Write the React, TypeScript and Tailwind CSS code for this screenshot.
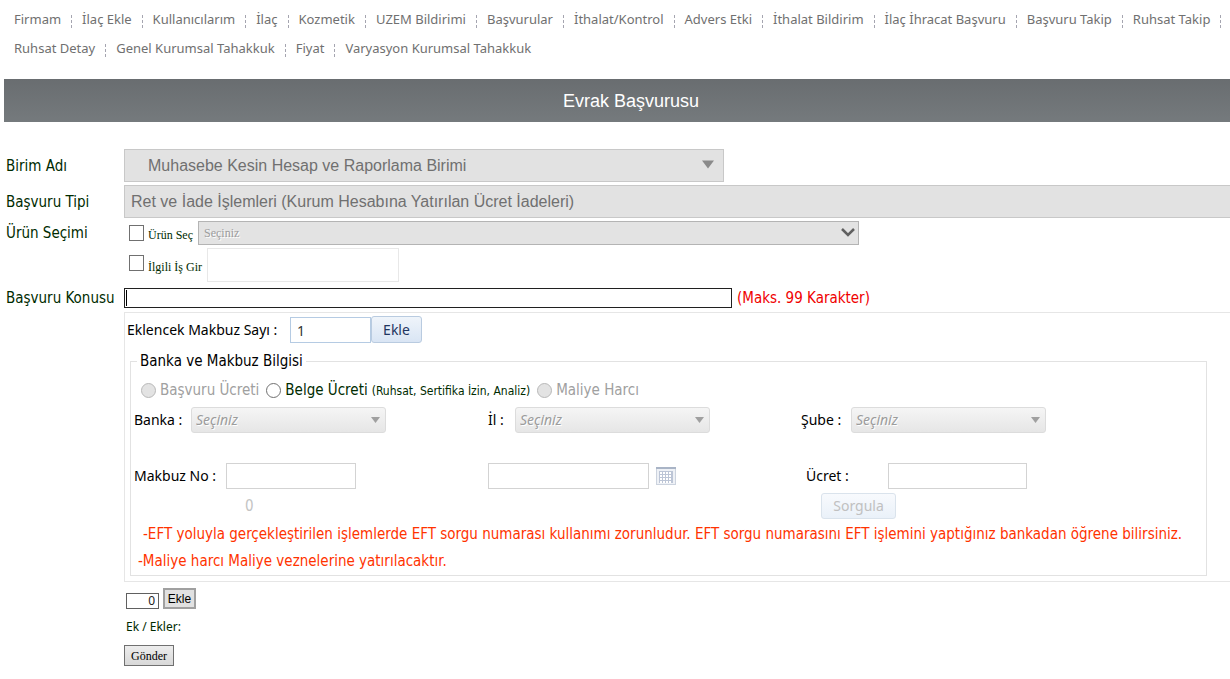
import { useState } from "react";
import type { ReactNode } from "react";

const MENU = [
  [
    "Firmam", "İlaç Ekle", "Kullanıcılarım", "İlaç", "Kozmetik", "UZEM Bildirimi", "Başvurular",
    "İthalat/Kontrol", "Advers Etki", "İthalat Bildirim", "İlaç İhracat Başvuru", "Başvuru Takip", "Ruhsat Takip",
  ],
  ["Ruhsat Detay", "Genel Kurumsal Tahakkuk", "Fiyat", "Varyasyon Kurumsal Tahakkuk"],
];

const UCRET_TIPLERI = [
  { id: "basvuru", label: "Başvuru Ücreti", disabled: true },
  { id: "belge", label: "Belge Ücreti", note: "(Ruhsat, Sertifika İzin, Analiz)" },
  { id: "maliye", label: "Maliye Harcı", disabled: true },
];

const BOX = "border border-[#d3d3d3] bg-white h-[26px] px-1 text-sm outline-none";
const TAHOMA = "font-['Tahoma','DejaVu_Sans_Condensed',sans-serif] text-[15px]";

function Row({ label, htmlFor, children }: { label: string; htmlFor?: string; children: ReactNode }) {
  return (
    <div className="flex items-center">
      <label htmlFor={htmlFor} className={`w-[124px] shrink-0 whitespace-nowrap pl-[6px] leading-5 text-[#002b00] ${TAHOMA}`}>
        {label}
      </label>
      {children}
    </div>
  );
}

function Triangle({ className }: { className: string }) {
  return (
    <svg viewBox="0 0 12 8" className={`pointer-events-none absolute ${className}`} aria-hidden="true">
      <path d="M0 0h12L6 8z" fill="currentColor" />
    </svg>
  );
}

function SmallSelect({ id, label, labelWidth }: { id: string; label: string; labelWidth: string }) {
  return (
    <div className="flex items-center">
      <label htmlFor={id} className={`${labelWidth} shrink-0 whitespace-nowrap text-sm`}>{label}</label>
      <div className="relative w-[195px]">
        <select
          id={id}
          disabled
          className="block h-[26px] w-full appearance-none rounded-[3px] border border-[#dcdcdc] bg-linear-to-b from-[#f5f5f5] to-[#e6e6e6] px-1 text-sm italic text-[#9c9c9c] opacity-100 text-shadow-[1px_1px_0_#fff]"
        >
          <option>Seçiniz</option>
        </select>
        <Triangle className="right-[6px] top-[10px] h-[6px] w-[9px] text-[#a0a0a0]" />
      </div>
    </div>
  );
}

function CalendarIcon() {
  return (
    <svg width="20" height="18" viewBox="0 0 20 18" shapeRendering="crispEdges" aria-hidden="true">
      <rect x="0" y="0" width="20" height="18" fill="#ccd3de" />
      <rect x="1" y="2" width="18" height="15" fill="#eef1f6" />
      <rect x="0" y="0" width="20" height="2" fill="#a9b4c6" />
      <rect x="3" y="4" width="14" height="12" fill="#bcc5d6" />
      {[4, 7, 10, 13].map((y) =>
        [4, 7, 10, 13].map((x) => <rect key={`${x}-${y}`} x={x} y={y + 1} width="2" height="2" fill="#fff" />)
      )}
    </svg>
  );
}

export default function App() {
  const [konu, setKonu] = useState("");
  const [ucretTipi, setUcretTipi] = useState("");

  return (
    <div className="overflow-x-hidden bg-white pb-3 font-['Noto_Sans','Open_Sans',sans-serif] text-black">
      {/* Menu */}
      <nav className="flex flex-col gap-[5px] pl-[14px] pt-2">
        {MENU.map((items, row) => (
          <ul key={row} className="flex h-6 items-center whitespace-nowrap text-[13px] text-[#707070]">
            {items.map((item, i) => (
              <li key={item} className="flex items-center">
                <a href="#">{item}</a>
                {(row === 0 || i < items.length - 1) && (
                  <span className="mx-[10px] mt-[3px] h-[13px] border-l border-dashed border-[#a5a5b0]" />
                )}
              </li>
            ))}
          </ul>
        ))}
      </nav>

      <h1 className="ml-1 mt-[18px] flex h-[43px] items-center justify-center bg-linear-to-b from-[#696d70] to-[#757a7d] pl-7 font-['Liberation_Sans',Arial,sans-serif] text-lg text-white">
        Evrak Başvurusu
      </h1>

      <form className="mt-[27px] flex flex-col" onSubmit={(e) => e.preventDefault()}>
        <div className="flex flex-col gap-[3px]">
          <Row label="Birim Adı" htmlFor="birim">
            <div className="relative w-[600px]">
              <select
                id="birim"
                disabled
                className="block h-[33px] w-full appearance-none border border-[#c8c8c8] bg-[#e2e2e2] pl-[23px] font-['Liberation_Sans',Arial,sans-serif] text-base text-[#707070] opacity-100"
              >
                <option>Muhasebe Kesin Hesap ve Raporlama Birimi</option>
              </select>
              <Triangle className="right-[10px] top-[11px] h-[9px] w-3 text-[#8a8a8a]" />
            </div>
          </Row>
          <Row label="Başvuru Tipi" htmlFor="tip">
            <input
              id="tip"
              disabled
              value="Ret ve İade İşlemleri (Kurum Hesabına Yatırılan Ücret İadeleri)"
              className="h-[33px] flex-1 border border-r-0 border-[#c8c8c8] bg-[#e2e2e2] px-[6px] font-['Liberation_Sans',Arial,sans-serif] text-base text-[#707070]"
            />
          </Row>
          <Row label="Ürün Seçimi" htmlFor="urun">
            <div className="flex h-6 items-center pl-[5px] font-['Liberation_Serif','Times_New_Roman',serif] text-xs">
              <input id="urunSec" type="checkbox" className="h-4 w-[15px] appearance-none border border-[#707070] bg-white" />
              <label htmlFor="urunSec" className="w-[54px] whitespace-nowrap pl-1 pt-1 text-[#002b00]">Ürün Seç</label>
              <div className="relative w-[661px]">
                <select
                  id="urun"
                  disabled
                  className="block h-6 w-full appearance-none border border-[#b4b4b4] bg-[#e3e3e3] px-[5px] text-xs text-[#9c9c9c] opacity-100 text-shadow-[1px_1px_0_#fff]"
                >
                  <option>Seçiniz</option>
                </select>
                <svg viewBox="0 0 14 9" className="pointer-events-none absolute right-[4px] top-[7px] h-[9px] w-[14px]" aria-hidden="true">
                  <path d="M1 1l6 6 6-6" fill="none" stroke="#606060" strokeWidth="2.5" />
                </svg>
              </div>
            </div>
          </Row>
        </div>

        <div className="mt-[3px] flex items-center pl-[129px] font-['Liberation_Serif','Times_New_Roman',serif] text-xs">
          <input id="isGir" type="checkbox" className="mb-1 h-4 w-[15px] appearance-none border border-[#707070] bg-white" />
          <label htmlFor="isGir" className="w-[63px] whitespace-nowrap pl-1 pt-1 text-[#002b00]">İlgili İş Gir</label>
          <input aria-label="İlgili İş" className="h-[34px] w-48 border border-[#e8e8e8] bg-white px-1 outline-none" />
        </div>

        <div className="mt-[6px]">
          <Row label="Başvuru Konusu" htmlFor="konu">
            <div className="relative w-[608px]">
              <input
                id="konu"
                maxLength={99}
                value={konu}
                onChange={(e) => setKonu(e.target.value)}
                className="block h-5 w-full border border-[#202020] bg-white px-[3px] text-sm outline-none"
              />
              <span className="absolute left-[2px] top-[2px] h-4 w-px bg-black" />
            </div>
            <span className={`whitespace-nowrap pl-[5px] leading-5 text-[#f00000] ${TAHOMA}`}>(Maks. 99 Karakter)</span>
          </Row>
        </div>

        {/* Receipt panel */}
        <div className="ml-[124px] mt-[4px] border border-r-0 border-[#e6e6e6] pb-[5px] pl-[5px] pr-[23px]">
          <div className="-ml-[3px] flex items-center pt-[3px]">
            <label htmlFor="makbuzSayi" className="w-[163px] text-sm">Eklencek Makbuz Sayı :</label>
            <input id="makbuzSayi" defaultValue="1" className="mt-[1px] h-[26px] w-[81px] border border-[#b5cbe3] px-[6px] text-sm text-[#333] outline-none" />
            <button type="button" className="h-[27px] w-[51px] rounded-[3px] border border-[#b9cbe0] bg-linear-to-b from-[#eff4fa] to-[#d9e5f4] text-sm text-[#1f3560]">
              Ekle
            </button>
          </div>

          <fieldset className="mt-[6px] min-w-0 border border-[#e2e2e2] pl-[3px]">
            <legend className={`ml-[3px] px-[3px] leading-6 ${TAHOMA}`}>Banka ve Makbuz Bilgisi</legend>
            <div className={`flex h-[34px] items-center whitespace-nowrap pl-[7px] ${TAHOMA}`}>
              {UCRET_TIPLERI.map((tip) => (
                <div key={tip.id} className="mr-[7px] flex items-center">
                  <input
                    id={tip.id}
                    type="radio"
                    name="ucretTipi"
                    disabled={tip.disabled}
                    checked={ucretTipi === tip.id}
                    onChange={() => setUcretTipi(tip.id)}
                    className="size-[15px] appearance-none rounded-full border border-[#707070] bg-white disabled:border-[#b8b8b8] disabled:bg-[#e3e3e3]"
                  />
                  <label htmlFor={tip.id} className={`pl-1 ${tip.disabled ? "text-[#a0a0a0]" : "text-[#002b00]"}`}>
                    {tip.label}
                    {tip.note && <span className="pl-1 text-xs">{tip.note}</span>}
                  </label>
                </div>
              ))}
            </div>

            <div className="grid grid-cols-[354fr_313fr_405fr] gap-y-[30px]">
              <SmallSelect id="banka" label="Banka :" labelWidth="w-[57px]" />
              <SmallSelect id="il" label="İl :" labelWidth="w-[27px]" />
              <SmallSelect id="sube" label="Şube :" labelWidth="w-[50px]" />

              <div className="flex items-center">
                <label htmlFor="makbuzNo" className="w-[92px] text-sm">Makbuz No :</label>
                <input id="makbuzNo" className={`${BOX} w-[130px]`} />
              </div>
              <div className="flex items-center gap-[7px]">
                <input aria-label="Tarih" className={`${BOX} w-[161px]`} />
                <button type="button" aria-label="Takvim"><CalendarIcon /></button>
              </div>
              <div className="flex items-center pl-[5px]">
                <label htmlFor="ucret" className="w-[82px] text-sm">Ücret :</label>
                <input id="ucret" className={`${BOX} w-[139px]`} />
              </div>
            </div>

            <div className="grid grid-cols-[667fr_405fr] pt-1">
              <span className={`pl-[111px] leading-[26px] text-[#c4c4c4] ${TAHOMA}`}>0</span>
              <div className="pl-5">
                <button
                  type="button"
                  disabled
                  className="block h-[26px] w-[75px] rounded-[3px] border border-[#dae3ec] bg-linear-to-b from-[#f8fafd] to-[#eaf1f9] text-sm text-[#c0c0c0]"
                >
                  Sorgula
                </button>
              </div>
            </div>

            <p className={`whitespace-nowrap pl-[9px] pt-[2px] leading-[27px] text-[#ff3300] ${TAHOMA}`}>
              -EFT yoluyla gerçekleştirilen işlemlerde EFT sorgu numarası kullanımı zorunludur. EFT sorgu numarasını EFT işlemini yaptığınız bankadan öğrene bilirsiniz.
            </p>
            <p className={`pl-1 leading-[27px] text-[#ff3300] ${TAHOMA}`}>-Maliye harcı Maliye veznelerine yatırılacaktır.</p>
          </fieldset>
        </div>

        {/* Attachments */}
        <div className="ml-[124px] mt-[6px] flex flex-col items-start">
          <div className="flex items-end gap-1 pl-[2px]">
            <input aria-label="Ek sayısı" defaultValue="0" className="h-4 w-[33px] border border-[#606060] px-[3px] text-right text-xs text-[#222] outline-none" />
            <button type="button" className="h-[21px] w-[33px] border-2 border-[#a0a0a0] bg-[#e1e1e1] font-['Liberation_Sans',Arial,sans-serif] text-xs leading-none">
              Ekle
            </button>
          </div>
          <p className="mt-[9px] pl-[2px] text-xs leading-[18px] text-[#002b00]">Ek / Ekler:</p>
          <button type="submit" className="mt-[9px] h-[21px] w-[50px] border border-[#707070] bg-linear-to-b from-[#ededed] to-[#d8d8d8] font-['Liberation_Serif','Times_New_Roman',serif] text-xs leading-none">
            Gönder
          </button>
        </div>
      </form>
    </div>
  );
}
